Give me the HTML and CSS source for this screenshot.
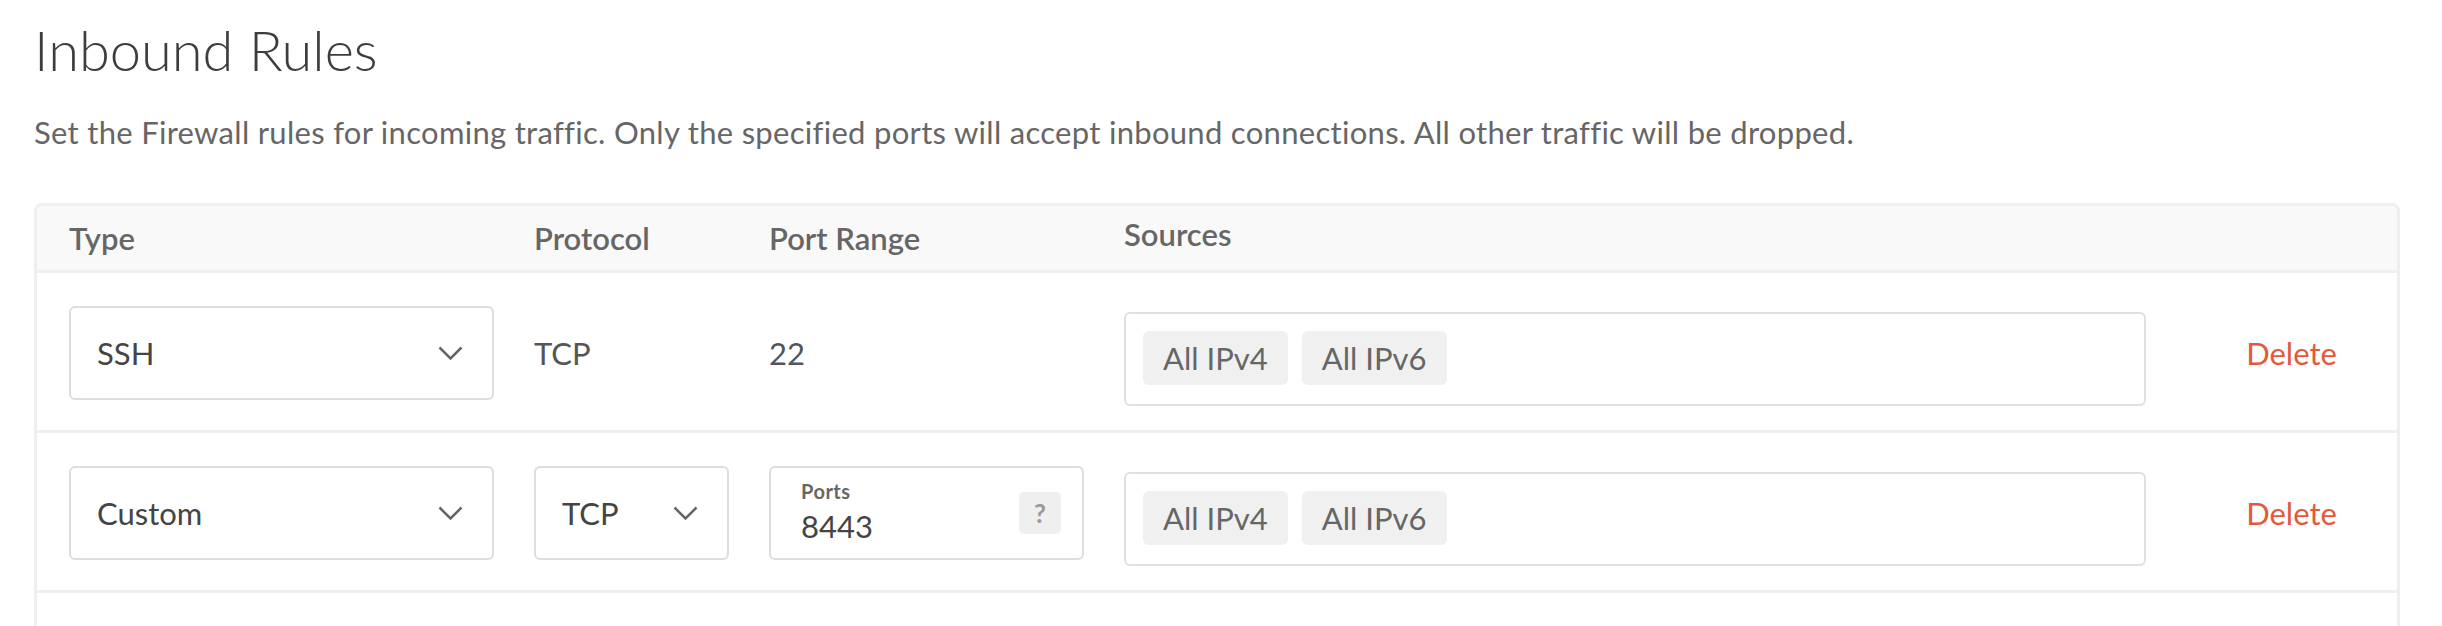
FILE: index.html
```html
<!DOCTYPE html>
<html lang="en">
<head>
<meta charset="utf-8">
<title>Inbound Rules</title>
<link rel="stylesheet" href="styles.css">
</head>
<body>
<main class="page">
  <h1 class="title">Inbound Rules</h1>
  <p class="desc">Set the Firewall rules for incoming traffic. Only the specified ports will accept inbound connections. All other traffic will be dropped.</p>

  <section class="table">
    <div class="row head">
      <div class="hcell">Type</div>
      <div class="hcell">Protocol</div>
      <div class="hcell">Port Range</div>
      <div class="hcell hcell-sources">Sources</div>
      <div class="hcell"></div>
    </div>

    <div class="row">
      <div class="select">
        <span>SSH</span>
        <svg class="chev" width="25" height="14" viewBox="0 0 25 14"><polyline points="1.5,1.5 12.5,12.5 23.5,1.5"/></svg>
      </div>
      <div class="plain">TCP</div>
      <div class="plain">22</div>
      <div class="sources">
        <span class="chip">All IPv4</span>
        <span class="chip">All IPv6</span>
      </div>
      <div class="action"><span class="delete">Delete</span></div>
    </div>

    <div class="row">
      <div class="select">
        <span>Custom</span>
        <svg class="chev" width="25" height="14" viewBox="0 0 25 14"><polyline points="1.5,1.5 12.5,12.5 23.5,1.5"/></svg>
      </div>
      <div class="select">
        <span>TCP</span>
        <svg class="chev" width="25" height="14" viewBox="0 0 25 14"><polyline points="1.5,1.5 12.5,12.5 23.5,1.5"/></svg>
      </div>
      <div class="ports">
        <div class="ports-stack">
          <span class="ports-label">Ports</span>
          <span class="ports-value">8443</span>
        </div>
        <span class="help">?</span>
      </div>
      <div class="sources">
        <span class="chip">All IPv4</span>
        <span class="chip">All IPv6</span>
      </div>
      <div class="action"><span class="delete">Delete</span></div>
    </div>

    <div class="row row-empty"></div>
  </section>
</main>
</body>
</html>
```

FILE: styles.css
```css
* { box-sizing: border-box; }

html, body {
  margin: 0;
  padding: 0;
  background: #ffffff;
}

body {
  font-family: Lato, "Open Sans", "Liberation Sans", sans-serif;
  color: #444444;
}

.page {
  padding: 0 42px 0 34px;
}

.title {
  margin: 0;
  padding-top: 16px;
  font-size: 56px;
  line-height: 1.2;
  font-weight: 300;
  color: #3d3d3d;
}

.desc {
  margin: 31px 0 0 0;
  font-size: 31px;
  line-height: 1.2;
  letter-spacing: 0.3px;
  color: #666666;
}

.table {
  margin-top: 52px;
  border: 3px solid #efefef;
  border-radius: 8px 8px 0 0;
  border-bottom: none;
}

.row {
  display: grid;
  grid-template-columns: 425px 195px 315px 1022px 1fr;
  column-gap: 40px;
  padding: 33px 0 0 32px;
  height: 160px;
  border-bottom: 3px solid #efefef;
  align-items: start;
}

.row.head {
  height: 67px;
  padding-top: 0;
  align-items: center;
  background: #f9f9f9;
  border-radius: 6px 6px 0 0;
}

.hcell {
  font-size: 31px;
  font-weight: 600;
  color: #666666;
}

.hcell-sources {
  padding-bottom: 8px;
}

.select {
  height: 94px;
  border: 2px solid #dddddd;
  border-radius: 6px;
  display: flex;
  align-items: center;
  justify-content: space-between;
  padding: 0 29px 0 26px;
  font-size: 31px;
  color: #444444;
}

.chev {
  display: block;
  fill: none;
  stroke: #666666;
  stroke-width: 2.5;
}

.plain {
  height: 94px;
  display: flex;
  align-items: center;
  font-size: 31px;
  color: #555555;
}

.sources {
  margin-top: 6px;
  height: 94px;
  border: 2px solid #e0e0e0;
  border-radius: 6px;
  display: flex;
  align-items: center;
  gap: 14px;
  padding: 0 17px 2px;
}

.chip {
  height: 54px;
  display: flex;
  align-items: center;
  padding: 0 20px;
  background: #f0f0f0;
  border-radius: 6px;
  font-size: 31px;
  color: #666666;
}

.ports {
  height: 94px;
  border: 2px solid #dddddd;
  border-radius: 6px;
  display: flex;
  align-items: center;
  justify-content: space-between;
  padding: 0 21px 0 30px;
}

.ports-stack {
  display: flex;
  flex-direction: column;
  gap: 5px;
  padding-bottom: 3px;
}

.ports-label {
  font-size: 20px;
  line-height: 1.2;
  font-weight: 700;
  letter-spacing: 0.5px;
  color: #666666;
}

.ports-value {
  font-size: 31px;
  line-height: 1.2;
  color: #444444;
}

.help {
  width: 42px;
  height: 42px;
  border-radius: 5px;
  background: #efefef;
  color: #999999;
  font-size: 26px;
  font-weight: 700;
  display: flex;
  align-items: center;
  justify-content: center;
}

.action {
  height: 94px;
  display: flex;
  align-items: center;
  justify-content: center;
}

.delete {
  font-size: 31px;
  color: #e3593b;
}
```
